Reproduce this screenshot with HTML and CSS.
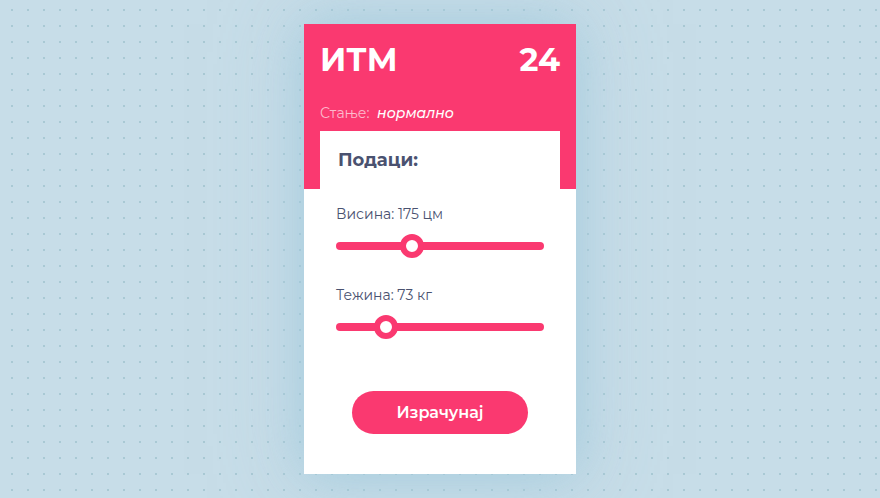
FILE: index.html
```html
<!DOCTYPE html>
<html lang="sr">
<head>
  <meta charset="utf-8">
  <meta name="viewport" content="width=device-width, initial-scale=1">
  <title>ИТМ</title>
  <link rel="stylesheet" href="styles.css">
</head>
<body>
  <main class="card">
    <header class="summary">
      <div class="score">
        <h1 class="title">ИТМ</h1>
        <output class="value">24</output>
      </div>
      <p class="status">Стање: <em class="state">нормално</em></p>
    </header>
    <form class="panel">
      <h2 class="heading">Подаци:</h2>
      <div class="field">
        <label class="label" for="height">Висина: 175 цм</label>
        <input class="slider" id="height" type="range" min="140" max="240" value="175">
      </div>
      <div class="field">
        <label class="label" for="weight">Тежина: 73 кг</label>
        <input class="slider" id="weight" type="range" min="40" max="200" value="73">
      </div>
      <button class="submit" type="button">Израчунај</button>
    </form>
  </main>
</body>
</html>
```

FILE: styles.css
```css
:root {
  --pink: #fa3970;
  --ink: #4a5270;
}

* {
  box-sizing: border-box;
  margin: 0;
}

body {
  min-height: 100vh;
  padding: 24px;
  display: flex;
  justify-content: center;
  align-items: center;
  font-family: Montserrat, Inter, "Open Sans", sans-serif;
  font-size: 14px;
  line-height: 18px;
  color: var(--ink);
  background: conic-gradient(from 270deg at 2px 2px, #a9c9d4 90deg, transparent 0) 11px 9px / 16px 16px #c7dde8;
}

.card {
  width: 100%;
  max-width: 272px;
  background: #fff;
  box-shadow: 0 0 48px rgba(150, 199, 216, 0.7), 0 0 80px rgba(190, 210, 230, 0.5);
}

.summary {
  padding: 16px 16px 67px;
  color: #fff;
  background: var(--pink);
}

.score {
  display: flex;
  justify-content: space-between;
  margin-bottom: 24px;
  font-size: 32px;
  line-height: 40px;
  font-weight: 700;
}

.title {
  font: inherit;
}

.status {
  color: #fdbacd;
}

.state {
  margin-left: 4px;
  font-weight: 500;
  color: #fff;
}

.panel {
  position: relative;
  margin: -58px 16px 0;
  padding: 16px 16px 40px;
  display: flex;
  flex-direction: column;
  background: #fff;
}

.heading {
  margin: 0 2px 32px;
  font-size: 18px;
  line-height: 26px;
  font-weight: 700;
}

.field {
  display: flex;
  flex-direction: column;
  gap: 11px;
  margin-bottom: 28px;
}

.label {
  font-weight: 400;
}

.slider {
  width: 100%;
  height: 24px;
  margin: 0;
  appearance: none;
  background: transparent;
}

.slider::-webkit-slider-runnable-track {
  height: 8px;
  border-radius: 4px;
  background: var(--pink);
}

.slider::-webkit-slider-thumb {
  width: 24px;
  height: 24px;
  margin-top: -8px;
  appearance: none;
  border: 6px solid var(--pink);
  border-radius: 50%;
  background: #fff;
}

.submit {
  margin: 24px 16px 0;
  padding: 12px;
  border: 0;
  border-radius: 24px;
  font: inherit;
  font-size: 16px;
  line-height: 19px;
  font-weight: 600;
  color: #fff;
  background: var(--pink);
}
```
